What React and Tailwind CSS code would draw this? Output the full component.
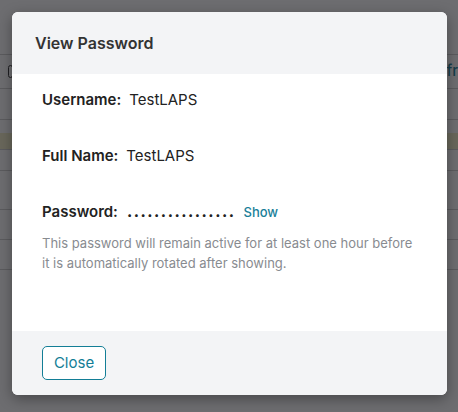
import React from 'react'

const font = { fontFamily: 'Inter, "Noto Sans", sans-serif' }

function Field({ label, children }) {
  return (
    <div className="flex items-center gap-[8px] text-[15px] leading-[22px]">
      <span className="font-semibold text-[#222]">{label}</span>
      {children}
    </div>
  )
}

export default function App() {
  return (
    <div className="relative w-[458px] h-[412px] overflow-hidden bg-white" style={font}>
      {/* page behind the dialog */}
      <div className="pt-[54px]">
        <div className="border-t border-[#d0d0d0] h-[34px] flex items-center justify-between pl-2 pr-0">
          <span className="w-[5px] h-[13px] border border-[#333] rounded-sm"></span>
          <span className="text-[15px] font-medium text-[#1a7f99]">efr</span>
        </div>
        <div className="border-t border-[#d0d0d0] h-[31px]"></div>
        <div className="border-t border-[#d0d0d0] h-[14px]"></div>
        <div className="bg-[#f5f0c8] h-[16px]"></div>
        <div className="border-t border-[#d0d0d0] h-[21px]"></div>
        <div className="border-t border-[#d0d0d0] h-[39px]"></div>
        <div className="border-t border-[#d0d0d0] h-[30px]"></div>
        <div className="border-t border-[#d0d0d0] h-[30px]"></div>
        <div className="border-t border-[#d0d0d0]"></div>
      </div>

      <div className="absolute inset-0 bg-[#131418]/[0.62] p-3">
        <div className="w-[435px] h-[383px] bg-white rounded-md overflow-hidden shadow-[0_4px_14px_rgba(0,0,0,0.35)] flex flex-col">
          <div className="h-[62px] bg-[#f3f4f6] flex items-center px-[23px]">
            <h2 className="text-[16px] font-semibold text-[#333]">View Password</h2>
          </div>

          <div className="flex-1 px-[30px] pt-[15px]">
            <Field label="Username:">
              <span className="text-[#222]">TestLAPS</span>
            </Field>
            <div className="mt-[34px]">
              <Field label="Full Name:">
                <span className="text-[#222]">TestLAPS</span>
              </Field>
            </div>
            <div className="mt-[34px]">
              <Field label="Password:">
                <span className="font-extrabold text-[#222] tracking-[1.5px] ml-[1px]">................</span>
                <button className="text-[13px] text-[#1a7f99] font-medium">Show</button>
              </Field>
            </div>
            <p className="mt-[10px] text-[13px] leading-[20px] text-[#888b90]">
              This password will remain active for at least one hour before it is automatically rotated after showing.
            </p>
          </div>

          <div className="h-[64px] bg-[#f3f4f6] flex items-center px-[30px]">
            <button className="w-[64px] h-[34px] border border-[#137e96] rounded-[5px] bg-white text-[15px] text-[#137e96]">
              Close
            </button>
          </div>
        </div>
      </div>
    </div>
  )
}
